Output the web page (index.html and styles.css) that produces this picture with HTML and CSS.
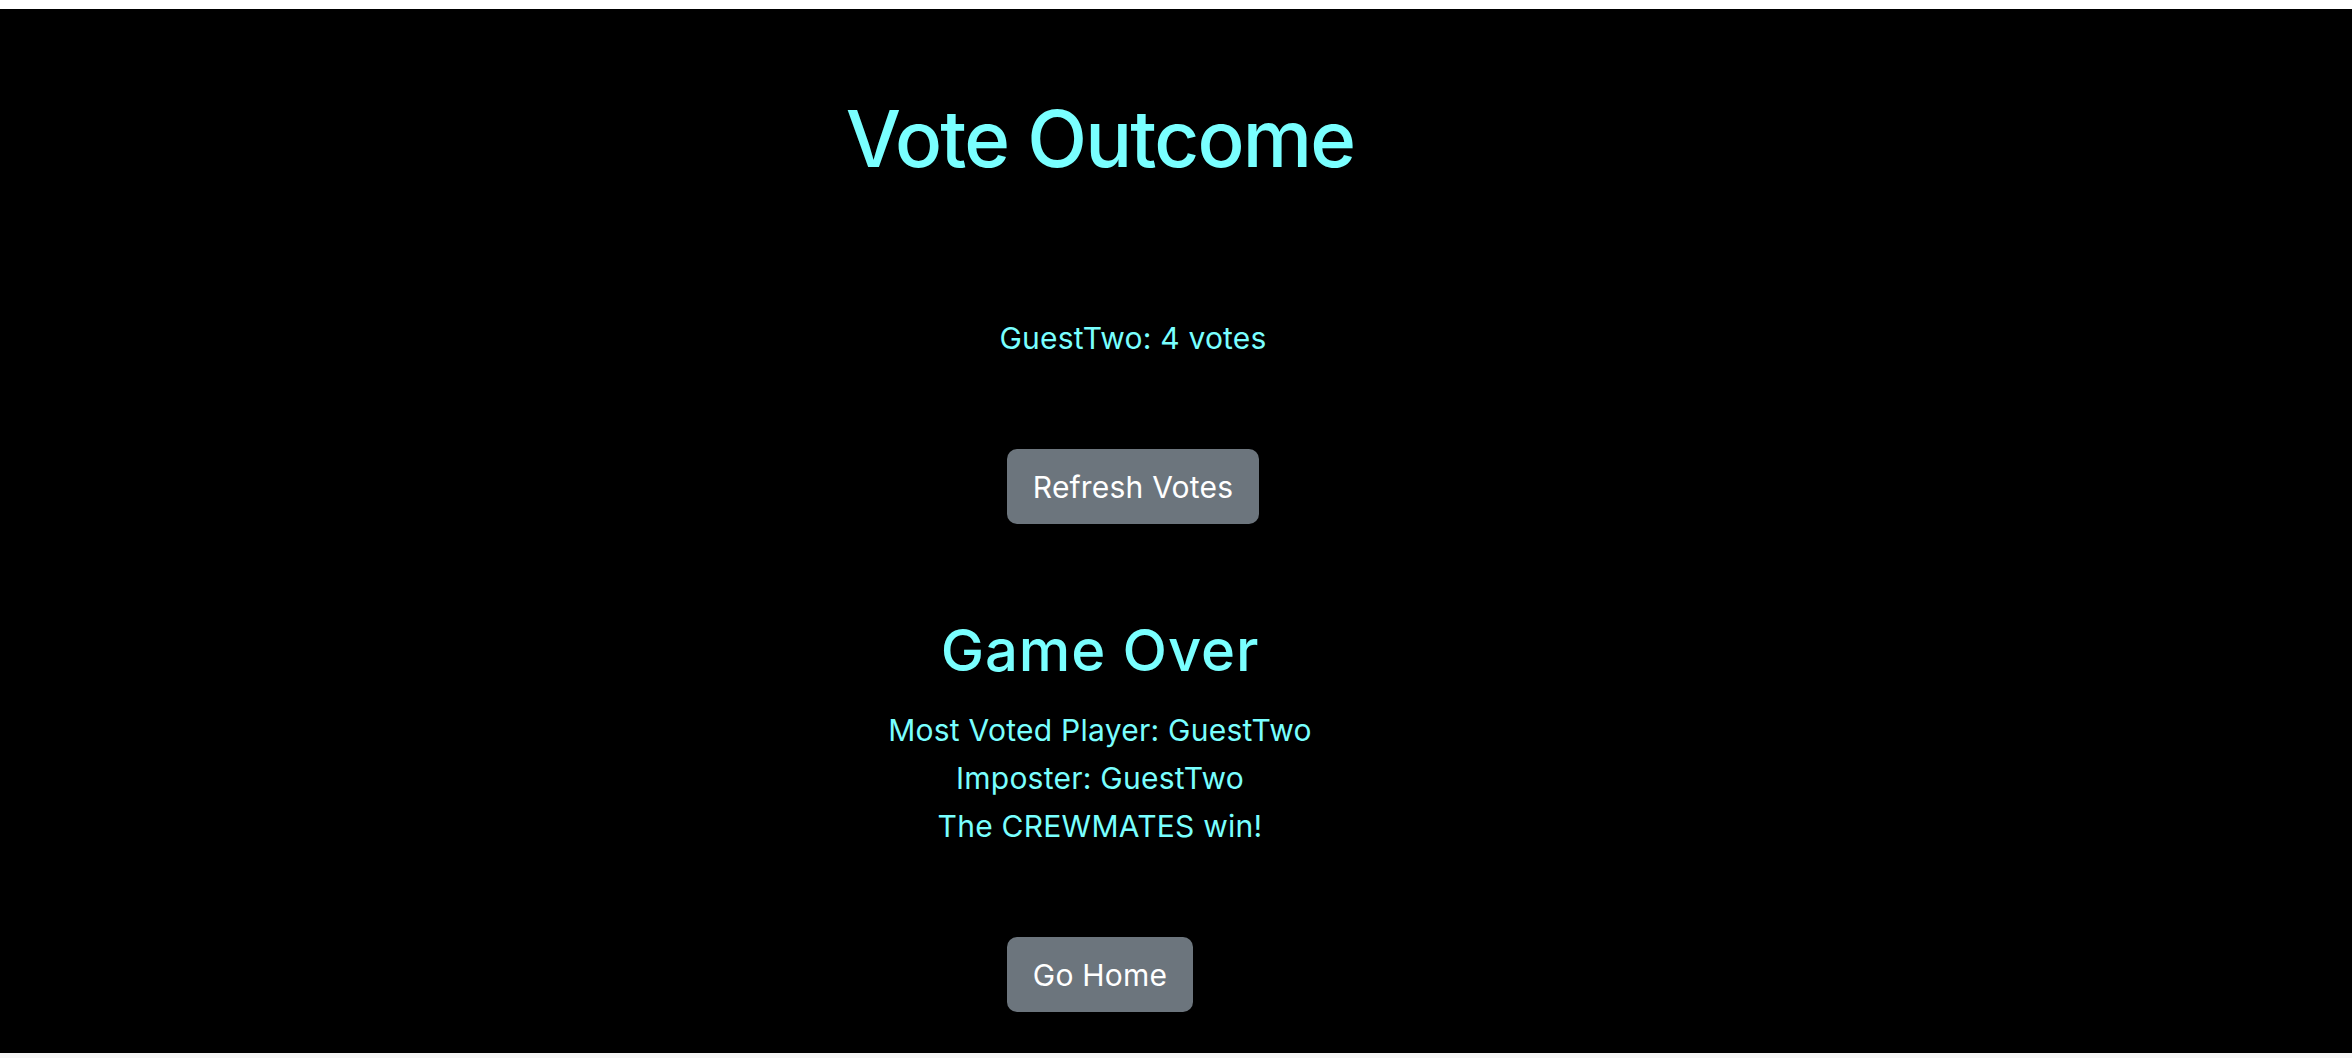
FILE: index.html
```html
<!DOCTYPE html>
<html lang="en">
<head>
<meta charset="utf-8">
<title>Vote Outcome</title>
<link rel="stylesheet" href="styles.css">
</head>
<body>
<div class="page">
  <main class="game">
    <h1 class="title">Vote Outcome</h1>
    <div class="tally">
      <ul class="votes">
        <li class="vote">GuestTwo: 4 votes</li>
      </ul>
      <button class="btn btn-refresh" type="button">Refresh Votes</button>
    </div>
    <section class="result">
      <h2 class="result-title">Game Over</h2>
      <p class="result-line">Most Voted Player: GuestTwo</p>
      <p class="result-line">Imposter: GuestTwo</p>
      <p class="result-line">The CREWMATES win!</p>
    </section>
    <button class="btn btn-home" type="button">Go Home</button>
  </main>
</div>
</body>
</html>
```

FILE: styles.css
```css
html, body {
  margin: 0;
  padding: 0;
}

body {
  background: #f6f6f6;
  font-family: Inter, "Noto Sans", "Liberation Sans", sans-serif;
  color: #79ffff;
}

.page {
  padding-top: 9px;
  background: #ffffff;
}

.game {
  background: #000000;
  height: 1044px;
  box-sizing: border-box;
  padding-right: 152px;
  display: flex;
  flex-direction: column;
  align-items: center;
  overflow: hidden;
}

.title {
  margin: 83px 0 0;
  font-size: 78px;
  font-weight: 500;
  line-height: 1.2;
  letter-spacing: -1.8px;
}

.tally {
  display: flex;
  flex-direction: column;
  align-items: center;
  padding-left: 66px;
  margin-top: 131px;
}

.votes {
  list-style: none;
  margin: 0;
  padding: 0;
}

.vote {
  font-size: 30px;
  line-height: 43.5px;
  letter-spacing: 0.2px;
}

.btn {
  font-family: Inter, "Noto Sans", "Liberation Sans", sans-serif;
  font-size: 30px;
  line-height: 45px;
  letter-spacing: 0.2px;
  color: #ffffff;
  background: #6c757d;
  border: 0;
  border-radius: 10px;
  padding: 16px 26px 14px;
  cursor: pointer;
}

.btn-refresh {
  margin-top: 89px;
}

.result {
  display: flex;
  flex-direction: column;
  align-items: center;
  margin-top: 92px;
}

.result-title {
  margin: 0 0 20px;
  font-size: 58px;
  font-weight: 500;
  line-height: 1.2;
  letter-spacing: 0.9px;
}

.result-line {
  margin: 0;
  font-size: 30px;
  line-height: 48px;
  letter-spacing: 0.25px;
}

.btn-home {
  margin-top: 87px;
}
```
